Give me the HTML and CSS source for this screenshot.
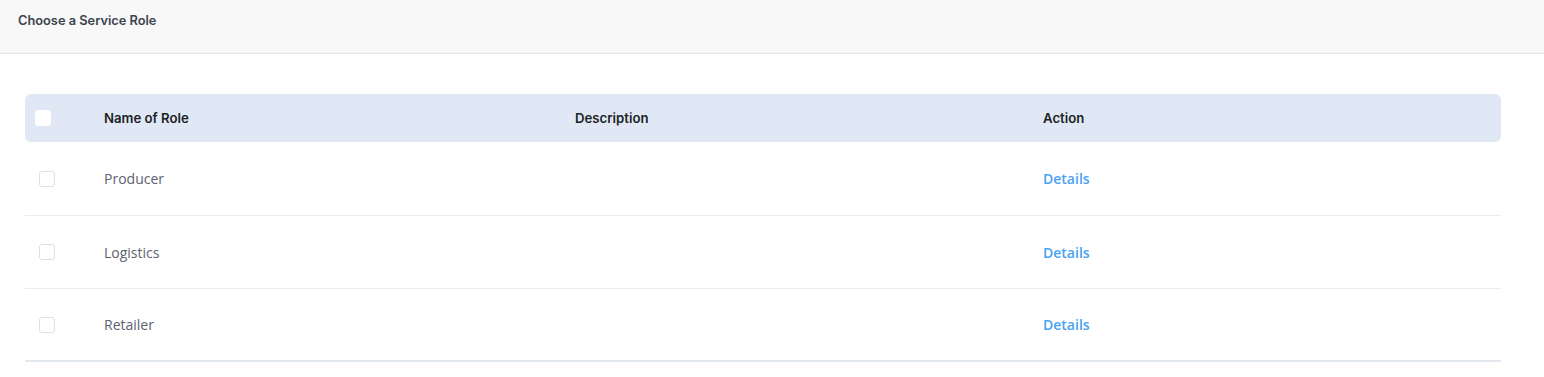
FILE: index.html
```html
<!DOCTYPE html>
<html>
<head>
<meta charset="utf-8">
<link rel="stylesheet" href="styles.css">
</head>
<body>
<header class="topbar"><h1 class="title">Choose a Service Role</h1></header>
<main class="content">
  <div class="table">
    <div class="row head">
      <div class="cell check"><span class="box box-head"></span></div>
      <div class="cell name">Name of Role</div>
      <div class="cell desc">Description</div>
      <div class="cell action">Action</div>
    </div>
    <div class="row body">
      <div class="cell check"><span class="box"></span></div>
      <div class="cell name">Producer</div>
      <div class="cell desc"></div>
      <div class="cell action"><a class="link">Details</a></div>
    </div>
    <div class="row body">
      <div class="cell check"><span class="box"></span></div>
      <div class="cell name">Logistics</div>
      <div class="cell desc"></div>
      <div class="cell action"><a class="link">Details</a></div>
    </div>
    <div class="row body last">
      <div class="cell check"><span class="box"></span></div>
      <div class="cell name">Retailer</div>
      <div class="cell desc"></div>
      <div class="cell action"><a class="link">Details</a></div>
    </div>
  </div>
</main>
</body>
</html>
```
FILE: styles.css
```css
* { box-sizing: border-box; }
html, body { margin: 0; padding: 0; background: #fff; }
body { font-family: "Open Sans", "Liberation Sans", sans-serif; }

.topbar {
  height: 54px;
  background: #f8f8f8;
  border-bottom: 1px solid #e2e2e2;
  padding: 13px 18px 0;
}
.title {
  margin: 0;
  font-family: "Inter", "Liberation Sans", sans-serif;
  font-size: 12.8px;
  font-weight: 600;
  color: #3d4450;
  letter-spacing: 0;
}

.content { padding: 40px 43px 0 25px; }

.table { width: 1476px; }

.row {
  display: grid;
  grid-template-columns: 79px 471px 468px 1fr;
  align-items: center;
}
.head {
  height: 48px;
  background: #e1e8f5;
  border-radius: 6px;
  font-family: "Inter", "Liberation Sans", sans-serif;
  font-weight: 600;
  font-size: 13.2px;
  color: #1c1f26;
}
.body {
  height: 74px;
  border-bottom: 1px solid #e9ecf1;
  font-size: 14px;
  color: #5b6270;
}
.body + .body { height: 73px; }
.body.last { height: 73px; border-bottom: 2px solid #e3e8ef; }

.check { display: flex; align-items: center; padding-left: 14px; }
.head .check { padding-left: 10px; }

.box {
  width: 16px;
  height: 16px;
  border-radius: 3px;
  border: 1px solid #dcdfe4;
  background: #fff;
  display: block;
}
.box-head { border-color: #fff; }

.link {
  color: #4aa2f4;
  font-weight: 600;
  font-size: 14px;
}
```
